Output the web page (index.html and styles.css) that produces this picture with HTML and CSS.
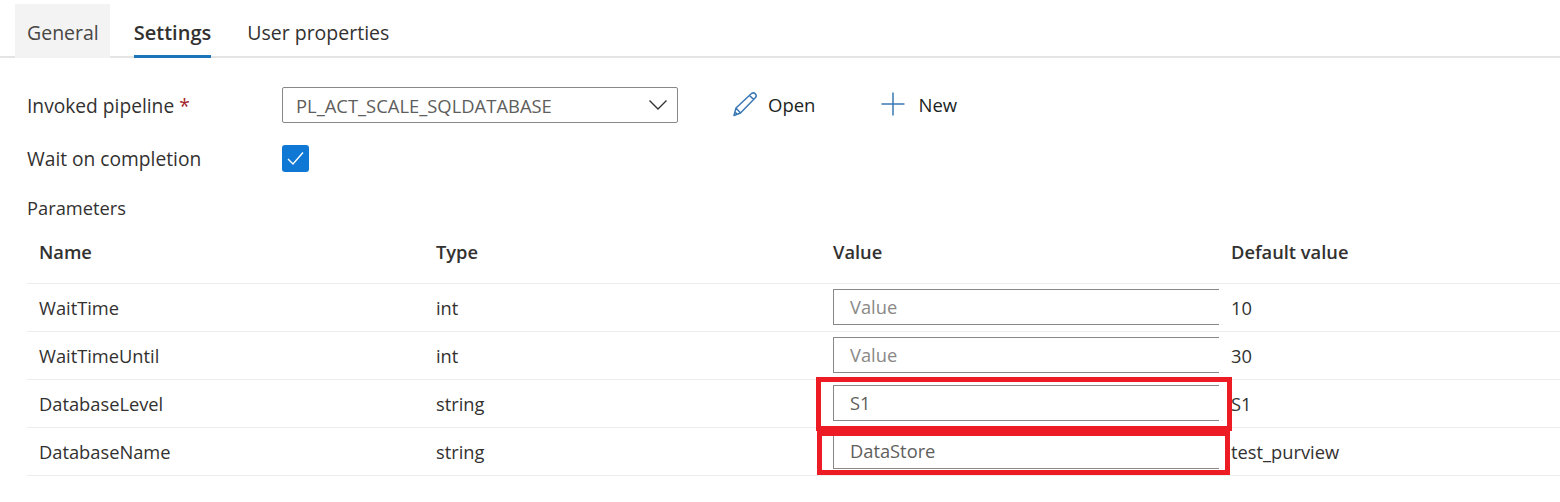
FILE: index.html
```html
<!DOCTYPE html>
<html lang="en">
<head>
  <meta charset="UTF-8" />
  <title>Settings</title>
  <link rel="stylesheet" href="styles.css">
</head>
<body>

  <div class="tabs">
    <div class="tab tab-hover">General</div>
    <div class="tab tab-active">Settings</div>
    <div class="tab">User properties</div>
  </div>

  <div class="form-row row-pipeline">
    <label class="form-label">Invoked pipeline <span class="req">*</span></label>
    <div class="select">
      <span>PL_ACT_SCALE_SQLDATABASE</span>
      <svg width="20" height="12" viewBox="0 0 20 12"><path d="M1.5 1.5 L10 10 L18.5 1.5" fill="none" stroke="#333" stroke-width="1.4"/></svg>
    </div>
    <div class="action action-open">
      <svg width="26" height="26" viewBox="0 0 26 26"><path d="M2 24.5 L4 17 L19.5 2.5 Q21.5 1 23.5 3 Q25 5 23.5 6.5 L8.5 22 Z M4 17 L8.5 22 M17.5 4.5 L21.8 8.6 M3 21 L5.5 23.6" fill="none" stroke="#3a78b5" stroke-width="1.5" stroke-linejoin="round"/></svg>
      <span>Open</span>
    </div>
    <div class="action action-new">
      <svg width="24" height="24" viewBox="0 0 24 24"><path d="M12 0.5 V23.5 M0.5 12 H23.5" fill="none" stroke="#3a78b5" stroke-width="1.5"/></svg>
      <span>New</span>
    </div>
  </div>

  <div class="form-row row-wait">
    <label class="form-label">Wait on completion</label>
    <div class="checkbox">
      <svg width="17" height="15" viewBox="0 0 17 15"><path d="M1 8 L6 13 L16 1.5" fill="none" stroke="#fff" stroke-width="1.4"/></svg>
    </div>
  </div>

  <div class="section-label">Parameters</div>

  <div class="params">
    <div class="param-row param-head">
      <div>Name</div><div>Type</div><div>Value</div><div>Default value</div>
    </div>
    <div class="param-row">
      <div>WaitTime</div><div>int</div>
      <div class="value-cell"><div class="value-input placeholder">Value</div></div>
      <div>10</div>
    </div>
    <div class="param-row">
      <div>WaitTimeUntil</div><div>int</div>
      <div class="value-cell"><div class="value-input placeholder">Value</div></div>
      <div>30</div>
    </div>
    <div class="param-row">
      <div>DatabaseLevel</div><div>string</div>
      <div class="value-cell"><div class="value-input">S1</div><div class="mark mark-one"></div></div>
      <div>S1</div>
    </div>
    <div class="param-row">
      <div>DatabaseName</div><div>string</div>
      <div class="value-cell"><div class="value-input">DataStore</div><div class="mark mark-two"></div></div>
      <div>test_purview</div>
    </div>
  </div>

</body>
</html>
```

FILE: styles.css
```css
body {
  margin: 0;
  background: #fff;
  font-family: "Open Sans", "Noto Sans", Arial, sans-serif;
  font-size: 18.3px;
  color: #323130;
  overflow: hidden;
}
.tabs {
  display: flex;
  height: 52px;
  margin-top: 4px;
  padding-left: 15px;
  border-bottom: 2px solid #e4e4e4;
}
.tab {
  font-size: 19.5px;
  line-height: 57px;
  margin-right: 36px;
  height: 54px;
  box-sizing: border-box;
}
.tab-hover {
  background: #f3f3f3;
  padding: 0 11px 0 12px;
  margin-right: 24px;
  color: #484644;
}
.tab-active {
  font-size: 20px;
  font-weight: 600;
  border-bottom: 3px solid #1a75bb;
}
.form-row {
  display: flex;
  align-items: center;
  padding-left: 27px;
}
.form-label {
  width: 255px;
  font-weight: 500;
  font-size: 19.2px;
}
.req {
  color: #a4262c;
}
.row-pipeline {
  margin-top: 29px;
  height: 36px;
}
.select {
  width: 396px;
  height: 36px;
  box-sizing: border-box;
  border: 1px solid #8a8886;
  border-radius: 2px;
  display: flex;
  align-items: center;
  justify-content: space-between;
  padding: 0 9px 0 13px;
  color: #605e5c;
  font-size: 18.4px;
}
.action {
  display: flex;
  align-items: center;
  color: #201f1e;
  font-size: 18.5px;
  margin-top: -2px;
}
.action-open {
  margin-left: 54px;
  gap: 10px;
}
.action-new {
  margin-left: 66px;
  gap: 13px;
}
.row-wait {
  margin-top: 21px;
  height: 28px;
}
.checkbox {
  width: 27px;
  height: 27px;
  border-radius: 3px;
  background: #0f78d4;
  display: flex;
  align-items: center;
  justify-content: center;
}
.section-label {
  margin: 23px 0 0 27px;
  font-weight: 500;
  line-height: 26px;
}
.params {
  margin: 8px 0 0 27px;
}
.param-row {
  display: grid;
  grid-template-columns: 397px 397px 398px 1fr;
  height: 46px;
  padding: 0 0 1px 12px;
  border-bottom: 1px solid #ededed;
  align-items: center;
}
.param-head {
  height: 44px;
  padding-bottom: 10px;
  font-weight: 600;
}
.value-cell {
  position: relative;
  padding-right: 12px;
}
.value-input {
  height: 36px;
  box-sizing: border-box;
  border: 1px solid #8a8886;
  border-right: 0;
  line-height: 34px;
  padding-left: 16px;
  color: #605e5c;
}
.placeholder {
  color: #8a8886;
}
.mark {
  position: absolute;
  box-sizing: border-box;
  border: 5px solid #ed1c24;
}
.mark-one {
  left: -17px;
  right: -1px;
  top: -8px;
  bottom: -10px;
}
.mark-two {
  left: -16px;
  right: 1px;
  top: -2px;
  bottom: -6px;
}
```
